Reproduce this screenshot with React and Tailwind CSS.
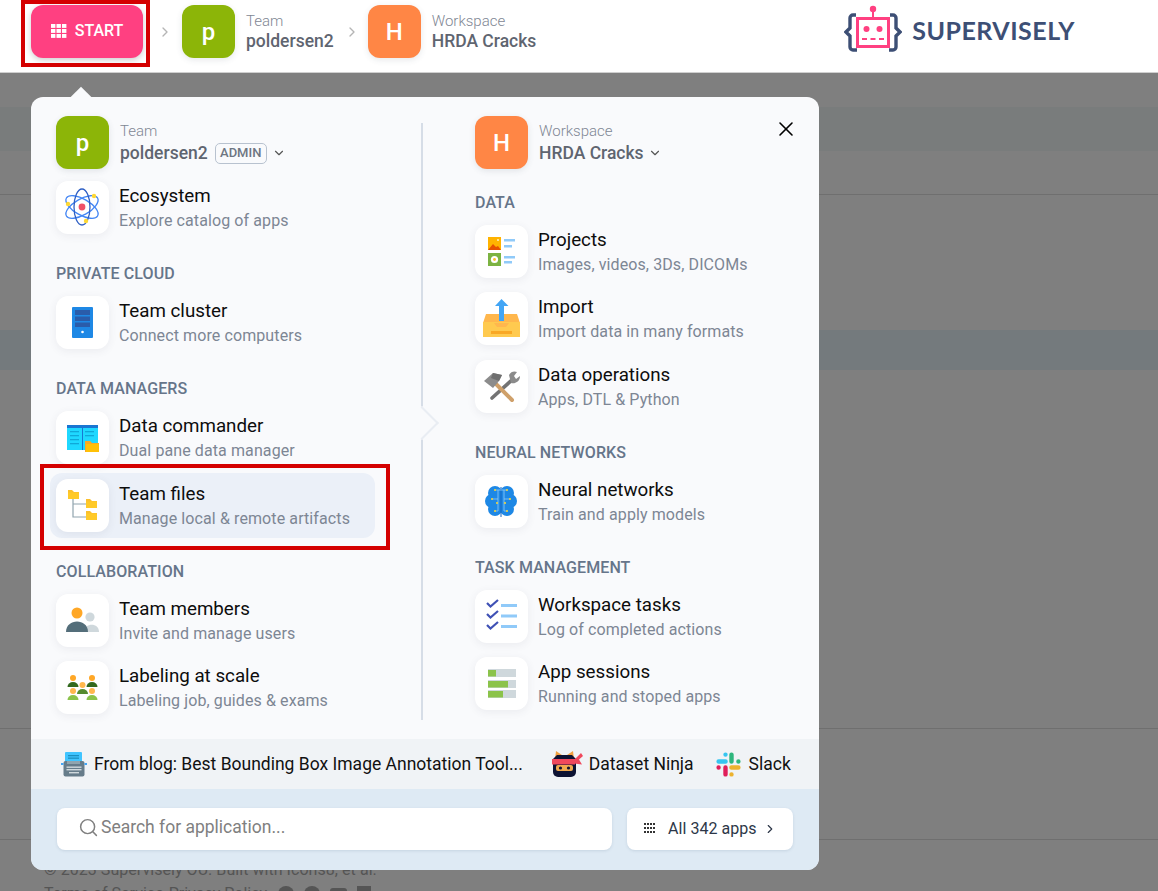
import { ChevronDown, ChevronRight, Search, X } from 'lucide-react'
import React from 'react'

const Tile = ({ children }) => (
  <div className="w-[53px] h-[53px] shrink-0 bg-white rounded-xl shadow-[0_2px_8px_rgba(60,70,90,0.08)]">
    <svg width="53" height="53" viewBox="0 0 53 53">{children}</svg>
  </div>
)

const Folder = ({ x, y }) => (
  <g>
    <path d={`M${x} ${y}h4l2 2h5v7h-11z`} fill="#fbc02d" />
    <rect x={x} y={y + 2.5} width="11" height="6.5" fill="#ffca28" />
  </g>
)

const Person = ({ x, y, head, body }) => (
  <g>
    <circle cx={x} cy={y} r="3" fill={head} />
    <path d={`M${x - 5.5} ${y + 9}a5.5 5 0 0 1 11 0z`} fill={body} />
  </g>
)

const icons = {
  ecosystem: (
    <>
      <g fill="none" stroke="#4285f4" strokeWidth="1.3">
        <ellipse cx="26" cy="26" rx="18" ry="8" transform="rotate(30 26 26)" />
        <ellipse cx="26" cy="26" rx="18" ry="8" transform="rotate(150 26 26)" />
        <ellipse cx="26" cy="26" rx="18" ry="8" stroke="#2f5fc4" transform="rotate(90 26 26)" />
      </g>
      <circle cx="26" cy="26" r="3.4" fill="#ef5068" />
      <circle cx="38" cy="15" r="2.2" fill="#fdd835" />
      <circle cx="12" cy="23" r="2.2" fill="#fdd835" />
      <circle cx="30" cy="40" r="2.2" fill="#fdd835" />
    </>
  ),
  cluster: (
    <>
      <rect x="16" y="11" width="21" height="31" rx="1" fill="#1e88e5" />
      <rect x="19" y="14" width="15" height="5" fill="#2a5caa" />
      <rect x="19" y="20.5" width="15" height="4.5" fill="#2a5caa" />
      <rect x="19" y="26.5" width="15" height="4.5" fill="#2a5caa" />
      <circle cx="26.5" cy="36" r="1.3" fill="#fff" />
    </>
  ),
  commander: (
    <>
      <rect x="11" y="14" width="31" height="25" fill="#1fd8ff" />
      <rect x="11" y="14" width="31" height="3" fill="#1976d2" />
      <rect x="26" y="17" width="1" height="22" fill="#1976d2" />
      <g fill="#10a8d8">
        <rect x="14" y="20" width="9" height="1.3" />
        <rect x="14" y="24" width="9" height="1.3" />
        <rect x="14" y="28" width="9" height="1.3" />
        <rect x="14" y="32" width="9" height="1.3" />
        <rect x="29" y="20" width="9" height="1.3" />
        <rect x="29" y="24" width="9" height="1.3" />
      </g>
      <path d="M29 30h5l2 2h7v9H29z" fill="#f9a825" />
      <rect x="30" y="33" width="13" height="8" fill="#ffc107" />
    </>
  ),
  files: (
    <>
      <path d="M17 20v18h13M17 25h13" fill="none" stroke="#90a4ae" strokeWidth="1.2" />
      <Folder x={12} y={11} />
      <Folder x={30} y={20} />
      <Folder x={30} y={32} />
    </>
  ),
  members: (
    <>
      <circle cx="34" cy="23" r="4.6" fill="#cfd8dc" />
      <path d="M28 38c0-9 15-10 15 0z" fill="#cfd8dc" />
      <circle cx="21" cy="19" r="5.5" fill="#ffa726" />
      <path d="M10 38c0-14 22-14 22 0z" fill="#546e7a" />
    </>
  ),
  labeling: (
    <>
      <Person x={17} y={17} head="#ffa726" body="#33691e" />
      <Person x={36} y={17} head="#ffa726" body="#33691e" />
      <Person x={26.5} y={24} head="#ffb74d" body="#558b2f" />
      <Person x={17} y={30} head="#ffb74d" body="#8bc34a" />
      <Person x={36} y={30} head="#ffb74d" body="#8bc34a" />
    </>
  ),
  projects: (
    <>
      <rect x="13" y="12" width="13" height="13" fill="#ffb300" />
      <path d="M13 25l5-6 3 3 2-1 3 4z" fill="#e65100" />
      <circle cx="23" cy="15" r="1" fill="#fff3c4" />
      <rect x="13" y="28" width="13" height="13" fill="#7cb342" />
      <circle cx="19.5" cy="34.5" r="3.6" fill="#fff" />
      <circle cx="19.5" cy="34.5" r="1.4" fill="#fbc02d" />
      <g fill="#90caf9">
        <rect x="29" y="14" width="11" height="2.5" />
        <rect x="29" y="20" width="8" height="2.5" />
        <rect x="29" y="31" width="11" height="2.5" />
        <rect x="29" y="36" width="8" height="2.5" />
      </g>
    </>
  ),
  import: (
    <>
      <path d="M11 22h31l3 9H8z" fill="#ffb74d" />
      <rect x="8" y="30" width="37" height="15" fill="#ffca4f" />
      <path d="M19 31h15l-3 4H22z" fill="#ffb74d" />
      <rect x="16" y="39" width="21" height="3" fill="#f9a825" />
      <path d="M26.5 7l7 7h-4.5v15h-5V14H20z" fill="#42a5f5" />
    </>
  ),
  operations: (
    <>
      <path d="M38 19L17 38" stroke="#737373" strokeWidth="3.6" strokeLinecap="round" />
      <path d="M34 15a7 7 0 0 1 8-3l-3 4 2 3 4-3a7 7 0 0 1-9 7z" fill="#8a8a8a" />
      <path d="M19 22l18 18" stroke="#cfa06a" strokeWidth="4" strokeLinecap="round" />
      <path d="M9 21l9-8 9 2-3 6-6 7z" fill="#8c8c8c" />
      <path d="M18 13l9 2-3 6-8-3z" fill="#6f6f6f" />
    </>
  ),
  neural: (
    <>
      <g fill="#1e88e5">
        <circle cx="20" cy="18" r="7" />
        <circle cx="32" cy="18" r="7" />
        <circle cx="17" cy="26" r="7" />
        <circle cx="35" cy="26" r="7" />
        <circle cx="20" cy="34" r="7" />
        <circle cx="32" cy="34" r="7" />
        <circle cx="26" cy="26" r="10" />
      </g>
      <path d="M26 12v30" stroke="#1565c0" strokeWidth="1" />
      <g fill="none" stroke="#90caf9" strokeWidth="0.8">
        <path d="M20 15h12M23 15v9h-6M29 15v9h6M23 24v12h-3M29 24v12h3" />
      </g>
      <g fill="#fdd835">
        <circle cx="20" cy="15" r="1" />
        <circle cx="32" cy="15" r="1" />
        <circle cx="17" cy="24" r="1" />
        <circle cx="35" cy="24" r="1" />
        <circle cx="20" cy="36" r="1" />
        <circle cx="32" cy="36" r="1" />
        <circle cx="22" cy="28" r="1" />
        <circle cx="30" cy="28" r="1" />
      </g>
    </>
  ),
  tasks: (
    <>
      <g fill="none" stroke="#3f51b5" strokeWidth="2.2">
        <path d="M12 13l3.5 3.5L23 10" />
        <path d="M12 24l3.5 3.5L23 21" />
        <path d="M12 35l3.5 3.5L23 32" />
      </g>
      <g fill="#90caf9">
        <rect x="26" y="14" width="16" height="3" />
        <rect x="26" y="24.5" width="16" height="3" />
        <rect x="26" y="35" width="16" height="3" />
      </g>
    </>
  ),
  sessions: (
    <>
      <g fill="#cfd8dc">
        <rect x="13" y="12" width="28" height="8" />
        <rect x="13" y="23" width="28" height="8" />
        <rect x="13" y="33" width="28" height="8" />
      </g>
      <g fill="#8bc34a">
        <rect x="13" y="13" width="8" height="6.5" />
        <rect x="13" y="24" width="20" height="6.5" />
        <rect x="13" y="34" width="15" height="6.5" />
      </g>
    </>
  ),
}

const Item = ({ icon, title, desc, active, className = '' }) => (
  <div className={`flex items-center gap-[10px] ${active ? '-mx-[6px] px-[6px] h-[65px] bg-[#ebf0f8] rounded-xl' : 'h-[53px]'} ${className}`}>
    <Tile>{icons[icon]}</Tile>
    <div>
      <div className="pt-[1px] text-[18.75px] leading-[26px] text-[#0d0d0d] whitespace-nowrap">{title}</div>
      <div className="text-[16px] leading-[24px] tracking-[0.1px] text-[#7d8694] whitespace-nowrap">{desc}</div>
    </div>
  </div>
)

const Section = ({ className = '', children }) => (
  <div className={`text-[16px] leading-[22px] tracking-[0.1px] font-medium text-[#66758a] ${className}`}>{children}</div>
)

const Avatar = ({ letter, className }) => (
  <div className={`w-[53px] h-[53px] shrink-0 rounded-xl flex items-center justify-center text-white text-[24px] font-medium shadow-[0_2px_6px_rgba(60,70,90,0.12)] ${className}`}>
    {letter}
  </div>
)

const Grid3 = () => (
  <svg width="16" height="14" viewBox="0 0 16 14" fill="#fff">
    {[0, 5.5, 11].map((x) =>
      [0, 5, 10].map((y) => <rect key={`${x}-${y}`} x={x} y={y} width="4.4" height="3.9" />)
    )}
  </svg>
)

const Logo = () => (
  <svg width="58" height="52" viewBox="0 0 58 52" className="shrink-0">
    <g fill="none" stroke="#3d4f75" strokeWidth="3.4">
      <path d="M12 10H9a3 3 0 0 0-3 3v10l-4 4 4 4v11a3 3 0 0 0 3 3h4" />
      <path d="M46 10h3a3 3 0 0 1 3 3v10l4 4-4 4v11a3 3 0 0 1-3 3h-4" />
    </g>
    <rect x="13.5" y="13.5" width="31" height="28" fill="#fff" stroke="#ff4081" strokeWidth="3" />
    <path d="M29 4v9" stroke="#ff4081" strokeWidth="2" />
    <circle cx="29" cy="4" r="3.2" fill="#ff4081" />
    <circle cx="22.5" cy="24" r="3" fill="#ff4081" />
    <circle cx="35.5" cy="24" r="3" fill="#ff4081" />
    <path d="M18 34h5M26.5 34h5M35 34h5" stroke="#ff4081" strokeWidth="2" />
  </svg>
)

const Typewriter = () => (
  <svg width="26" height="25" viewBox="0 0 26 25" className="shrink-0">
    <rect x="4" y="0" width="17" height="10" rx="1" fill="#40c4ff" />
    <rect x="7" y="3" width="11" height="1.3" fill="#1c8fc0" />
    <rect x="7" y="5.5" width="11" height="1.3" fill="#1c8fc0" />
    <rect x="2.5" y="9" width="21" height="15.5" rx="2" fill="#667c8a" />
    <rect x="6" y="9" width="13" height="3" fill="#90a4ae" />
    <rect x="0" y="11" width="2.5" height="2" fill="#42a5f5" />
    <rect x="23.5" y="11" width="2.5" height="2" fill="#42a5f5" />
    <g fill="#cfd8dc">
      <rect x="5.5" y="14.5" width="15" height="1.4" />
      <rect x="5.5" y="17" width="15" height="1.4" />
      <rect x="8" y="20" width="10" height="1.4" />
    </g>
  </svg>
)

const Ninja = () => (
  <svg width="31" height="26" viewBox="0 0 31 26" className="shrink-0">
    <path d="M3 8L4 0l6 4h5l6-4 1 8z" fill="#f0a040" />
    <path d="M1 8l4-4h15l4 4v13a5 5 0 0 1-5 5H6a5 5 0 0 1-5-5z" fill="#0d1333" />
    <rect x="4" y="14" width="17" height="6" rx="2" fill="#f0a94e" />
    <circle cx="8.5" cy="17" r="1.6" fill="#0d1333" />
    <circle cx="16.5" cy="17" r="1.6" fill="#0d1333" />
    <path d="M0 8h23v5.5H0z" fill="#f0485c" />
    <path d="M22 9l7-7 2 3-4 3.5 3 5-8-1z" fill="#f0485c" />
  </svg>
)

const Slack = () => (
  <svg width="25" height="25" viewBox="0 0 25 25" className="shrink-0" fill="none" strokeLinecap="round" strokeWidth="4.4">
    <path d="M9.5 2.6v0M2.6 9.5h7" stroke="#36c5f0" />
    <path d="M22.4 9.5v0M15.5 2.6v7" stroke="#2eb67d" />
    <path d="M15.5 22.4v0M22.4 15.5h-7" stroke="#ecb22e" />
    <path d="M2.6 15.5v0M9.5 22.4v-7" stroke="#e01e5a" />
  </svg>
)

const App = () => (
  <div className="relative h-[891px] overflow-hidden bg-[#7f7f7f] font-[Roboto]">
    <header className="h-[73px] bg-white border-b border-[#cfcfcf] flex items-start pt-[5px] pl-[31px] pr-[83px]">
      <button className="w-[112px] h-[53px] pb-[1px] rounded-xl bg-[#ff4081] text-white flex items-center justify-center gap-[8px] text-[16px] font-medium shadow-[0_2px_6px_rgba(0,0,0,0.2)]">
        <Grid3 />
        START
      </button>
      <div className="h-[53px] flex items-center ml-[14px] mr-[9px]">
        <ChevronRight size={16} className="text-[#b5b5b5]" />
      </div>
      <Avatar letter="p" className="bg-[#8cb508]" />
      <div className="ml-[11px] pt-[6px]">
        <div className="text-[15px] leading-[20px] text-[#7f8794] font-light">Team</div>
        <div className="text-[17.5px] leading-[20px] text-[#5f6570] font-medium">poldersen2</div>
      </div>
      <div className="h-[53px] flex items-center ml-[10px] mr-[8px]">
        <ChevronRight size={16} className="text-[#b5b5b5]" />
      </div>
      <Avatar letter="H" className="bg-[#ff8645]" />
      <div className="ml-[11px] pt-[6px]">
        <div className="text-[15px] leading-[20px] text-[#7f8794] font-light">Workspace</div>
        <div className="text-[17.5px] leading-[20px] text-[#5f6570] font-medium">HRDA Cracks</div>
      </div>
      <div className="ml-auto flex items-center gap-[10px] h-[52px]">
        <Logo />
        <span className="font-[Lato] font-bold text-[25px] text-[#3d4f75] tracking-[0.5px]">SUPERVISELY</span>
      </div>
    </header>

    {/* page behind the overlay */}
    <div className="mt-[34px] h-[44px] bg-[#797c7c]" />
    <div className="h-[44px] border-b border-[#6f6f6f]" />
    <div className="mt-[135px] h-[40px] bg-[#747a7d]" />
    <div className="mt-[358px] border-t border-[#6f6f6f]" />
    <div className="mt-[110px] border-t border-[#6f6f6f]" />
    <div className="pl-[44px] pt-[16px] text-[16px] text-[#555]">
      <div className="leading-[27px] tracking-[0.05px]">© 2023 Supervisely OÜ. Built with Icons8, et al.</div>
      <div className="flex items-start leading-[22px] whitespace-nowrap">
        <span>Terms of Service</span>
        <span className="ml-[5px]">Privacy Policy</span>
        <div className="ml-[11px] mt-[3px] flex gap-[10px]">
          <span className="w-[16px] h-[16px] rounded-full bg-[#555]" />
          <span className="w-[16px] h-[16px] rounded-full bg-[#555]" />
          <span className="w-[17px] h-[12px] mt-[2px] rounded-[3px] bg-[#555]" />
          <span className="w-[14px] h-[14px] bg-[#555]" />
        </div>
      </div>
    </div>

    {/* overlay panel */}
    <div className="absolute left-[31px] top-[97px] w-[788px] h-[773px] bg-[#f9fafc] rounded-xl overflow-hidden flex flex-col">
      <button className="absolute right-[21px] top-[20px] text-black">
        <X size={24} strokeWidth={1.6} />
      </button>
      <div className="relative flex flex-1 pt-[19px] pl-[25px]">
        <div className="w-[365px] shrink-0">
          <div className="flex items-center gap-[11px] h-[53px]">
            <Avatar letter="p" className="bg-[#8cb508]" />
            <div className="mt-[1px]">
              <div className="text-[15px] leading-[20px] text-[#7f8794] font-light">Team</div>
              <div className="flex items-center text-[17.5px] leading-[24px] text-[#5f6570] font-medium">
                poldersen2
                <span className="ml-[7px] w-[52px] h-[21px] flex items-center justify-center border border-[#b8c2cf] rounded-[5px] text-[13px] text-[#6e7682]">ADMIN</span>
                <ChevronDown size={14} className="ml-[5px] text-[#555]" />
              </div>
            </div>
          </div>
          <Item icon="ecosystem" title="Ecosystem" desc="Explore catalog of apps" className="mt-[12px]" />
          <Section className="mt-[29px]">PRIVATE CLOUD</Section>
          <Item icon="cluster" title="Team cluster" desc="Connect more computers" className="mt-[11px]" />
          <Section className="mt-[29px]">DATA MANAGERS</Section>
          <Item icon="commander" title="Data commander" desc="Dual pane data manager" className="mt-[11px]" />
          <Item icon="files" title="Team files" desc="Manage local & remote artifacts" active className="mt-[9px] w-[325px]" />
          <Section className="mt-[23px]">COLLABORATION</Section>
          <Item icon="members" title="Team members" desc="Invite and manage users" className="mt-[11px]" />
          <Item icon="labeling" title="Labeling at scale" desc="Labeling job, guides & exams" className="mt-[14px]" />
        </div>

        <div className="relative w-[2px] h-[597px] mt-[7px] bg-[#d6dde7] shrink-0">
          <div className="absolute left-[-11px] top-[288px] w-[24px] h-[24px] rotate-45 bg-[#f9fafc] border-t-2 border-r-2 border-[#e9edf3]" />
        </div>

        <div className="ml-[52px] flex-1">
          <div className="flex items-center gap-[11px] h-[53px]">
            <Avatar letter="H" className="bg-[#ff8645]" />
            <div className="mt-[1px]">
              <div className="text-[15px] leading-[20px] text-[#7f8794] font-light">Workspace</div>
              <div className="flex items-center text-[17.5px] leading-[24px] text-[#5f6570] font-medium">
                HRDA Cracks
                <ChevronDown size={14} className="ml-[4px] text-[#555]" />
              </div>
            </div>
          </div>
          <Section className="mt-[23px]">DATA</Section>
          <Item icon="projects" title="Projects" desc="Images, videos, 3Ds, DICOMs" className="mt-[11px]" />
          <Item icon="import" title="Import" desc="Import data in many formats" className="mt-[14px]" />
          <Item icon="operations" title="Data operations" desc="Apps, DTL & Python" className="mt-[15px]" />
          <Section className="mt-[29px]">NEURAL NETWORKS</Section>
          <Item icon="neural" title="Neural networks" desc="Train and apply models" className="mt-[11px]" />
          <Section className="mt-[29px]">TASK MANAGEMENT</Section>
          <Item icon="tasks" title="Workspace tasks" desc="Log of completed actions" className="mt-[11px]" />
          <Item icon="sessions" title="App sessions" desc="Running and stoped apps" className="mt-[14px]" />
        </div>
      </div>

      <div className="h-[50px] shrink-0 bg-[#f0f3f6] flex items-center text-[17.5px] text-[#111] whitespace-nowrap">
        <div className="ml-[30px]"><Typewriter /></div>
        <span className="ml-[7px]">From blog: Best Bounding Box Image Annotation Tool...</span>
        <div className="ml-[29px]"><Ninja /></div>
        <span className="ml-[6px]">Dataset Ninja</span>
        <div className="ml-[22px]"><Slack /></div>
        <span className="ml-[8px]">Slack</span>
      </div>

      <div className="h-[81px] shrink-0 pt-[19px] bg-[#deeaf4] flex items-start gap-[15px] pl-[26px] pr-[26px]">
        <div className="w-[555px] h-[42px] pb-[3px] bg-white rounded-lg flex items-center pl-[21px] shadow-[0_1px_3px_rgba(60,90,120,0.15)]">
          <Search size={21} strokeWidth={1.7} className="text-[#808080]" />
          <span className="ml-[2px] text-[17.5px] text-[#808080]">Search for application...</span>
        </div>
        <button className="w-[166px] h-[42px] pb-[1px] bg-white rounded-lg flex items-center pl-[17px] text-[16px] tracking-[0.05px] text-[#2d3748] shadow-[0_1px_3px_rgba(60,90,120,0.15)]">
          <svg width="12" height="11" viewBox="0 0 12 11" fill="#333">
            {[0, 3, 6, 9].map((x) =>
              [0, 4, 8].map((y) => <rect key={`${x}-${y}`} x={x} y={y} width="2" height="2" />)
            )}
          </svg>
          <span className="ml-[12px]">All 342 apps</span>
          <ChevronRight size={14} className="ml-[6px]" />
        </button>
      </div>
    </div>

    {/* arrow above the panel */}
    <div className="absolute left-[73px] top-[90px] w-[16px] h-[16px] rotate-45 bg-[#f9fafc]" />

    {/* annotation boxes */}
    <div className="absolute left-[21px] top-0 w-[129px] h-[67px] border-[4px] border-[#d40000]" />
    <div className="absolute left-[40px] top-[464px] w-[350px] h-[86px] border-[4px] border-[#d40000]" />
  </div>
)

export default App
